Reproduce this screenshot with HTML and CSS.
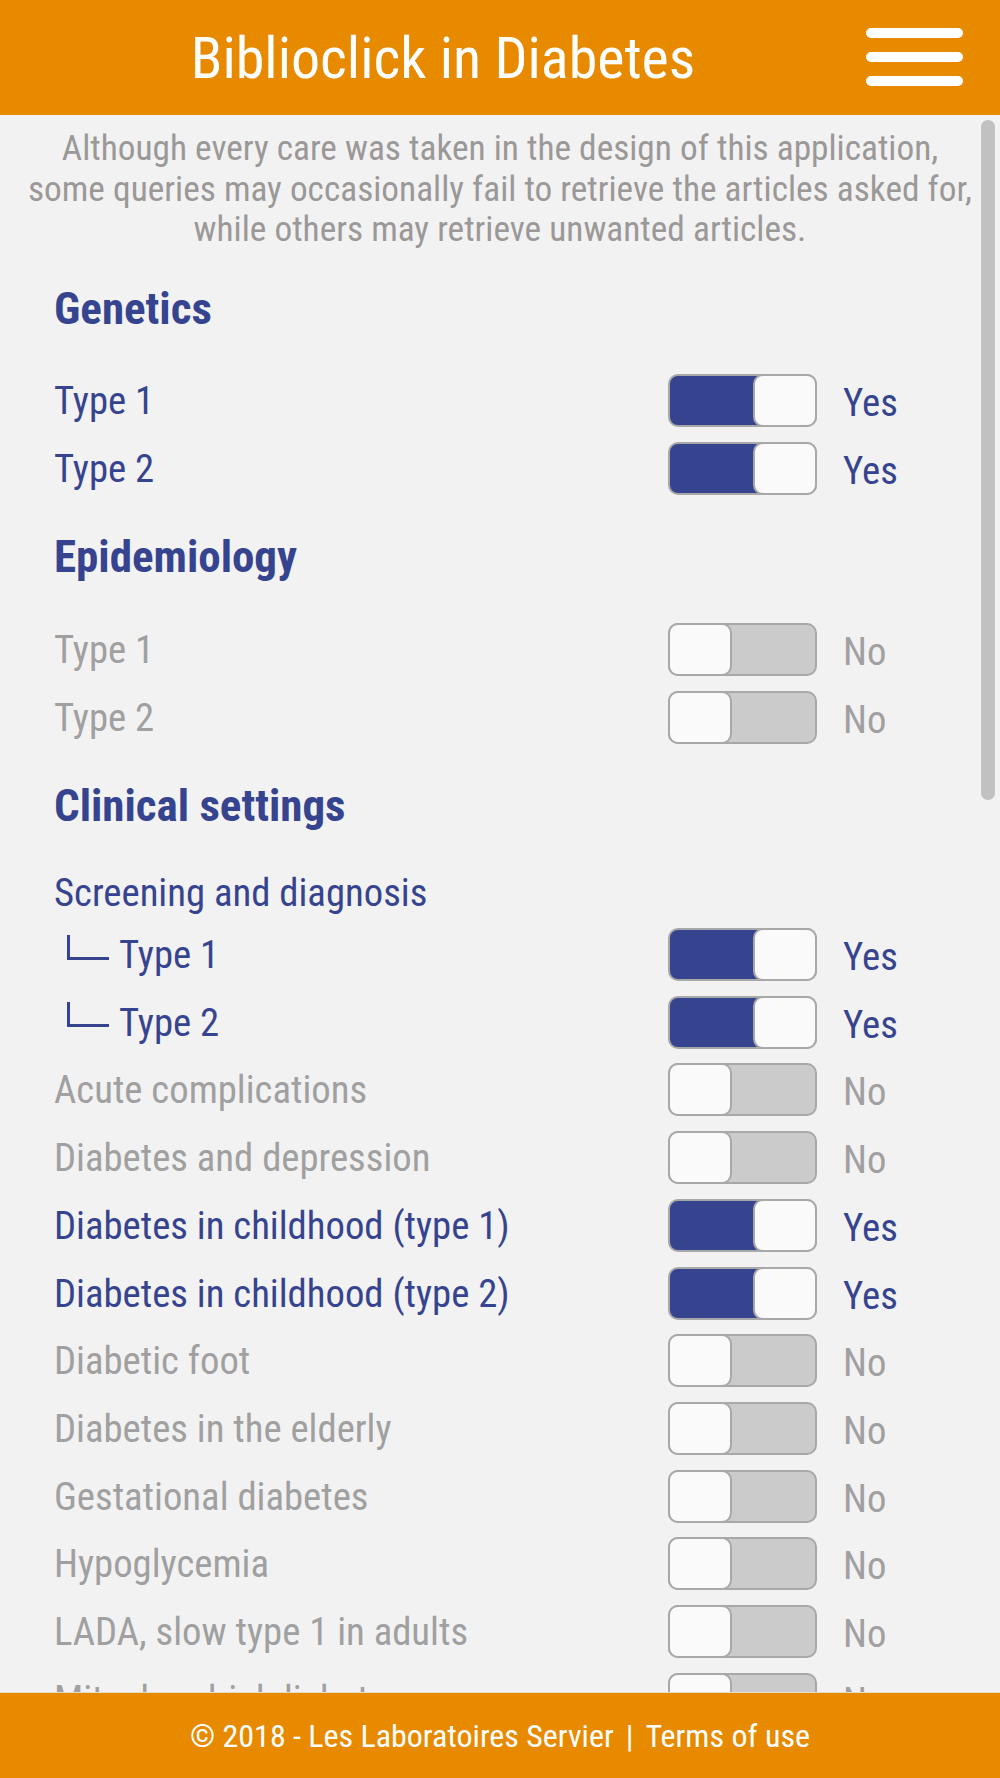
FILE: index.html
```html
<!DOCTYPE html>
<html lang="en">
<head>
<meta charset="utf-8">
<title>Biblioclick in Diabetes</title>
<link rel="stylesheet" href="styles.css">
</head>
<body>
<div class="app">
  <header class="topbar">
    <h1 class="title">Biblioclick in Diabetes</h1>
    <button class="menu" aria-label="Menu">
      <span class="bar"></span><span class="bar"></span><span class="bar"></span>
    </button>
  </header>

  <main class="content">
    <div class="scroll-thumb"></div>
    <p class="disclaimer">
      <span class="line">Although every care was taken in the design of this application,</span>
      <span class="line">some queries may occasionally fail to retrieve the articles asked for,</span>
      <span class="line">while others may retrieve unwanted articles.</span>
    </p>

    <section class="section">
      <h2 class="section-title">Genetics</h2>
      <div class="row on"><span class="label">Type 1</span><span class="toggle"><span class="knob"></span></span><span class="state">Yes</span></div>
      <div class="row on"><span class="label">Type 2</span><span class="toggle"><span class="knob"></span></span><span class="state">Yes</span></div>
    </section>

    <section class="section">
      <h2 class="section-title">Epidemiology</h2>
      <div class="row off"><span class="label">Type 1</span><span class="toggle"><span class="knob"></span></span><span class="state">No</span></div>
      <div class="row off"><span class="label">Type 2</span><span class="toggle"><span class="knob"></span></span><span class="state">No</span></div>
    </section>

    <section class="section">
      <h2 class="section-title">Clinical settings</h2>
      <div class="row group on"><span class="label">Screening and diagnosis</span></div>
      <div class="row on"><span class="label sub"><span class="branch"></span>Type 1</span><span class="toggle"><span class="knob"></span></span><span class="state">Yes</span></div>
      <div class="row on"><span class="label sub"><span class="branch"></span>Type 2</span><span class="toggle"><span class="knob"></span></span><span class="state">Yes</span></div>
      <div class="row off"><span class="label">Acute complications</span><span class="toggle"><span class="knob"></span></span><span class="state">No</span></div>
      <div class="row off"><span class="label">Diabetes and depression</span><span class="toggle"><span class="knob"></span></span><span class="state">No</span></div>
      <div class="row on"><span class="label">Diabetes in childhood (type 1)</span><span class="toggle"><span class="knob"></span></span><span class="state">Yes</span></div>
      <div class="row on"><span class="label">Diabetes in childhood (type 2)</span><span class="toggle"><span class="knob"></span></span><span class="state">Yes</span></div>
      <div class="row off"><span class="label">Diabetic foot</span><span class="toggle"><span class="knob"></span></span><span class="state">No</span></div>
      <div class="row off"><span class="label">Diabetes in the elderly</span><span class="toggle"><span class="knob"></span></span><span class="state">No</span></div>
      <div class="row off"><span class="label">Gestational diabetes</span><span class="toggle"><span class="knob"></span></span><span class="state">No</span></div>
      <div class="row off"><span class="label">Hypoglycemia</span><span class="toggle"><span class="knob"></span></span><span class="state">No</span></div>
      <div class="row off"><span class="label">LADA, slow type 1 in adults</span><span class="toggle"><span class="knob"></span></span><span class="state">No</span></div>
      <div class="row off"><span class="label">Mitochondrial diabetes</span><span class="toggle"><span class="knob"></span></span><span class="state">No</span></div>
      <div class="row off"><span class="label">Monogenic diabetes</span><span class="toggle"><span class="knob"></span></span><span class="state">No</span></div>
    </section>
  </main>

  <footer class="footer">
    <span>© 2018 - Les Laboratoires Servier</span><span class="sep">|</span><span>Terms of use</span>
  </footer>
</div>
</body>
</html>
```

FILE: styles.css
```css
* { box-sizing: border-box; }

html, body {
  margin: 0;
  padding: 0;
  height: 100%;
}

body {
  background: #f2f2f2;
  font-family: "Roboto Condensed", "Liberation Sans Narrow", "DejaVu Sans Condensed", Roboto, sans-serif;
  color: #36448f;
}

.app {
  height: 100vh;
  display: flex;
  flex-direction: column;
  overflow: hidden;
}

/* Header */
.topbar {
  flex: 0 0 115px;
  height: 115px;
  background: #e88a00;
  display: flex;
  align-items: center;
  padding-left: 20px;
  padding-right: 37px;
}

.title {
  flex: 1;
  margin: 0;
  text-align: center;
  color: #fff;
  font-weight: 400;
  font-size: 58px;
  line-height: 1;
}

.menu {
  width: 97px;
  height: 58px;
  padding: 0;
  border: 0;
  background: transparent;
  display: flex;
  flex-direction: column;
  justify-content: space-between;
  margin-top: -2px;
}

.menu .bar {
  display: block;
  width: 97px;
  height: 10px;
  border-radius: 5px;
  background: #fff;
}

/* Content */
.content {
  flex: 1;
  position: relative;
  overflow: hidden;
  padding: 0 20px 0 54px;
}

.scroll-thumb {
  position: absolute;
  top: 5px;
  right: 5px;
  width: 14px;
  height: 680px;
  border-radius: 7px;
  background: #c1c1c1;
}

.disclaimer {
  margin: 0 0 0 -54px;
  padding-top: 13px;
  padding-bottom: 4px;
  width: 1000px;
  text-align: center;
  color: #9b9898;
  font-size: 35.3px;
  line-height: 40.5px;
}

.disclaimer .line {
  display: block;
  white-space: nowrap;
}

.section-title {
  margin: 28px 0 31.5px;
  font-size: 45px;
  line-height: 54px;
  font-weight: 700;
  color: #36448f;
}

.row {
  display: grid;
  grid-template-columns: 1fr 149px 137px;
  column-gap: 26px;
  align-items: center;
  height: 67.7px;
  font-size: 38.7px;
}

.row.group {
  height: 56px;
  margin-top: 2.3px;
}

.row.on { color: #36448f; }
.row.off { color: #a0a0a0; }

.label {
  white-space: nowrap;
}

.label.sub {
  display: flex;
  align-items: center;
}

.branch {
  display: inline-block;
  width: 42px;
  height: 25px;
  margin: 0 10px 15px 13px;
  border-left: 3px solid #36448f;
  border-bottom: 3px solid #36448f;
}

.state {
  padding-top: 4px;
}

/* Toggle */
.toggle {
  position: relative;
  display: flex;
  width: 149px;
  height: 53px;
  border: 2px solid #a8a8a8;
  border-radius: 10px;
  background: #cbcbcb;
}

.row.on .toggle {
  background: #36448f;
  justify-content: flex-end;
}

.knob {
  width: 64px;
  height: 53px;
  margin: -2px;
  border: 2px solid #a8a8a8;
  border-radius: 10px;
  background: #fafafa;
}

/* Footer */
.footer {
  flex: 0 0 86px;
  height: 86px;
  background: #e88a00;
  border-top: 1px solid #e6dccd;
  display: flex;
  align-items: center;
  justify-content: center;
  color: #fff;
  font-size: 32px;
}

.footer .sep {
  margin: 0 12px;
}
```
